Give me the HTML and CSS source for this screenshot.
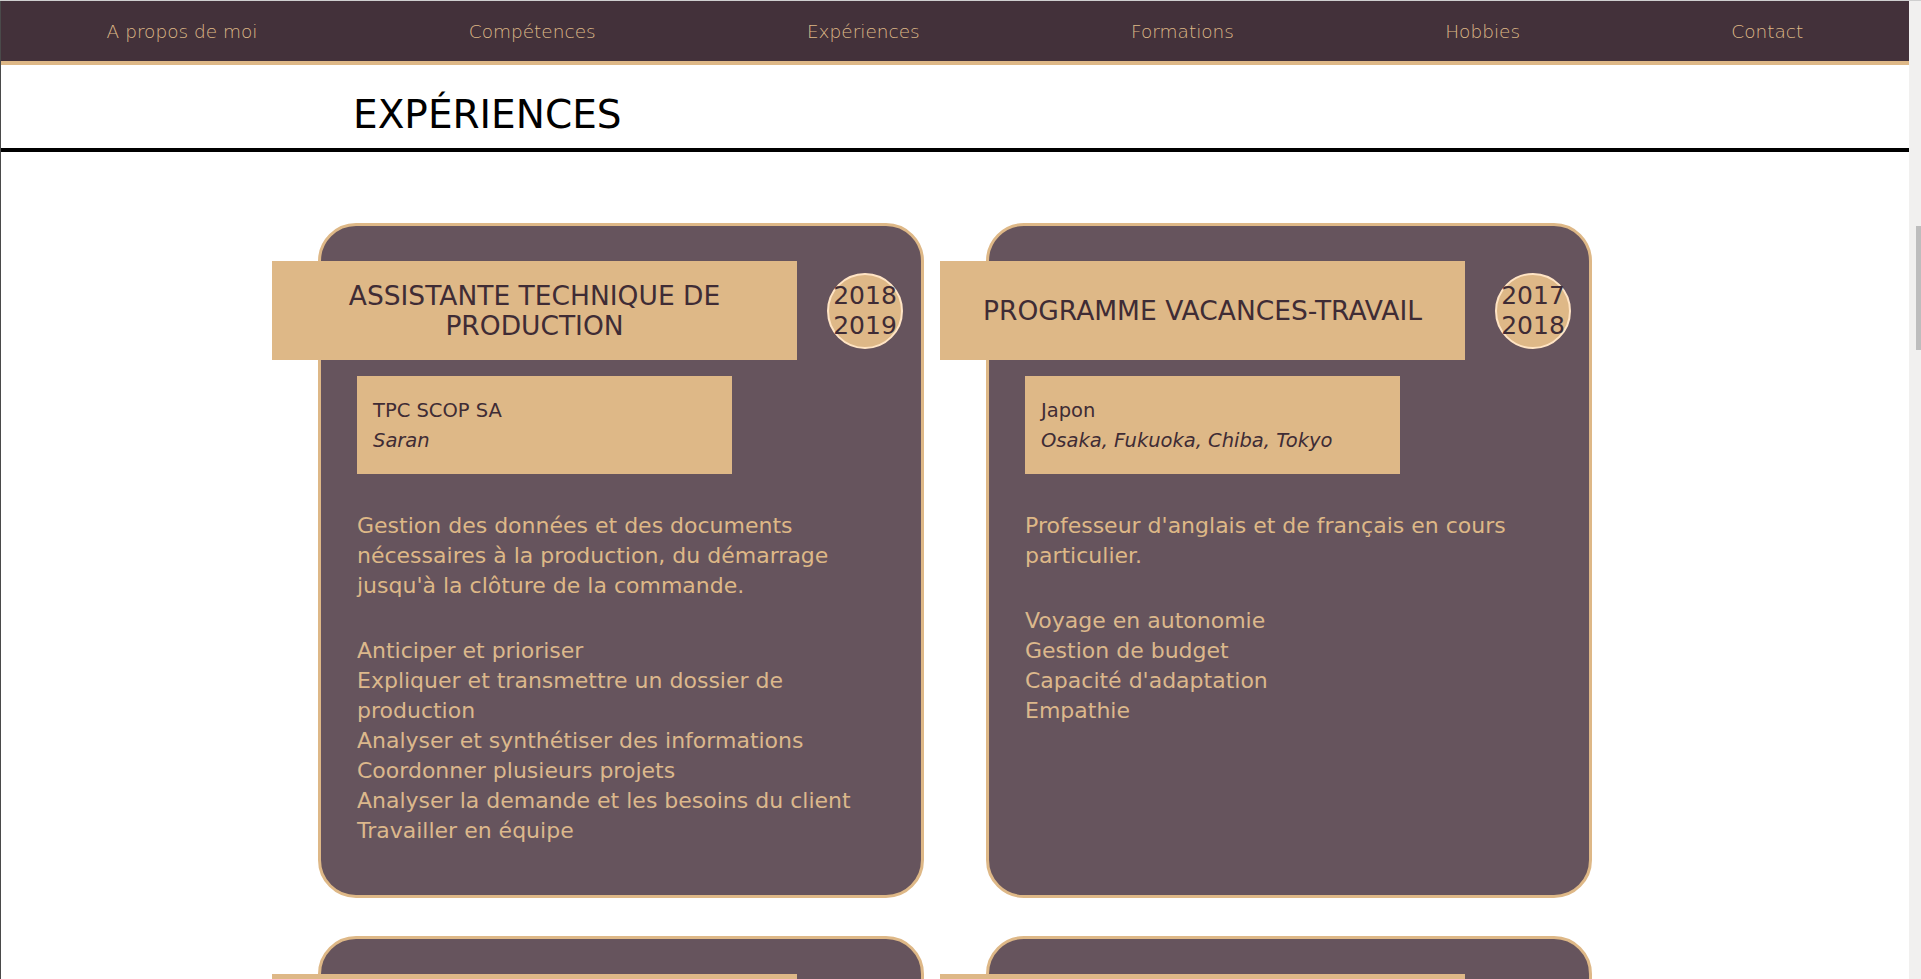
FILE: index.html
```html
<!DOCTYPE html>
<html lang="fr">
<head>
<meta charset="utf-8">
<title>Expériences</title>
<link rel="stylesheet" href="styles.css">
</head>
<body>
<div class="window">
  <div class="page">
    <nav class="nav">
      <a href="#">A propos de moi</a>
      <a href="#">Compétences</a>
      <a href="#">Expériences</a>
      <a href="#">Formations</a>
      <a href="#">Hobbies</a>
      <a href="#">Contact</a>
    </nav>
    <header class="section-title">
      <h1>EXPÉRIENCES</h1>
    </header>
    <main class="cards">
      <article class="card">
        <div class="card-head">
          <h2 class="band">ASSISTANTE TECHNIQUE DE PRODUCTION</h2>
          <div class="years"><span>2018</span><span>2019</span></div>
        </div>
        <div class="company">
          <div>TPC SCOP SA</div>
          <div class="place">Saran</div>
        </div>
        <p class="desc">Gestion des données et des documents nécessaires à la production, du démarrage jusqu'à la clôture de la commande.</p>
        <ul class="skills">
          <li>Anticiper et prioriser</li>
          <li>Expliquer et transmettre un dossier de production</li>
          <li>Analyser et synthétiser des informations</li>
          <li>Coordonner plusieurs projets</li>
          <li>Analyser la demande et les besoins du client</li>
          <li>Travailler en équipe</li>
        </ul>
      </article>
      <article class="card">
        <div class="card-head">
          <h2 class="band">PROGRAMME VACANCES-TRAVAIL</h2>
          <div class="years"><span>2017</span><span>2018</span></div>
        </div>
        <div class="company">
          <div>Japon</div>
          <div class="place">Osaka, Fukuoka, Chiba, Tokyo</div>
        </div>
        <p class="desc">Professeur d'anglais et de français en cours particulier.</p>
        <ul class="skills">
          <li>Voyage en autonomie</li>
          <li>Gestion de budget</li>
          <li>Capacité d'adaptation</li>
          <li>Empathie</li>
        </ul>
      </article>
      <article class="card">
        <div class="card-head">
          <div class="band"></div>
        </div>
      </article>
      <article class="card">
        <div class="card-head">
          <div class="band"></div>
        </div>
      </article>
    </main>
  </div>
  <div class="scrollbar"><div class="thumb"></div></div>
</div>
</body>
</html>
```
FILE: styles.css
```css
html, body {
  margin: 0;
  padding: 0;
  height: 100%;
  overflow: hidden;
}

body {
  font-family: "DejaVu Sans", "Liberation Sans", sans-serif;
  background: #ffffff;
}

.window {
  display: flex;
  height: 100vh;
  box-sizing: border-box;
  border-top: 1px solid #cfcfcf;
}

.page {
  flex: 1;
  min-width: 0;
  border-left: 1px solid #4a4a4a;
  background: #ffffff;
}

.scrollbar {
  width: 12px;
  flex: none;
  background: #f1f0ef;
  display: flex;
  justify-content: flex-end;
}

.thumb {
  width: 5px;
  height: 124px;
  margin-top: 225px;
  background: #bdbdbd;
}

.nav {
  height: 60px;
  background: #43313a;
  border-bottom: 4px solid #deb887;
  display: flex;
  justify-content: space-around;
  align-items: center;
}

.nav a {
  color: #deb887;
  text-decoration: none;
  font-size: 18.5px;
  font-weight: 300;
}

.section-title {
  border-bottom: 4px solid #000000;
  padding: 27px 0 11px 352px;
}

.section-title h1 {
  margin: 0;
  font-size: 39px;
  line-height: 45px;
  font-weight: normal;
  color: #000000;
}

.cards {
  display: grid;
  grid-template-columns: repeat(2, 606px);
  column-gap: 62px;
  row-gap: 38px;
  justify-content: center;
  padding-top: 71px;
}

.card {
  box-sizing: border-box;
  height: 675px;
  border: 3px solid #deb887;
  border-radius: 38px;
  background: #66545d;
  padding: 35px 36px 0 36px;
}

.card-head {
  display: flex;
  align-items: center;
  margin-left: -85px;
}

.band {
  flex: none;
  box-sizing: border-box;
  width: 525px;
  height: 99px;
  margin: 0;
  padding: 0 30px;
  background: #deb887;
  color: #3f2c35;
  font-size: 26.5px;
  line-height: 30px;
  font-weight: normal;
  text-align: center;
  display: flex;
  align-items: center;
  justify-content: center;
}

.years {
  flex: none;
  box-sizing: border-box;
  width: 76px;
  height: 76px;
  margin-left: 30px;
  border: 2px solid #ffe4c4;
  border-radius: 50%;
  background: #deb887;
  color: #3f2c35;
  font-size: 25px;
  line-height: 30px;
  display: flex;
  flex-direction: column;
  align-items: center;
  justify-content: center;
  white-space: nowrap;
}

.company {
  box-sizing: border-box;
  width: 375px;
  margin-top: 16px;
  padding: 20px 16px 18px;
  background: #deb887;
  color: #3f2c35;
  font-size: 19.5px;
  line-height: 30px;
}

.company .place {
  font-style: italic;
}

.desc {
  margin: 37px 0 0 0;
  color: #deb887;
  font-size: 22px;
  line-height: 30px;
}

.skills {
  list-style: none;
  margin: 35px 0 0 0;
  padding: 0;
  color: #dcb88c;
  font-size: 22px;
  line-height: 30px;
  font-weight: normal;
}
```
